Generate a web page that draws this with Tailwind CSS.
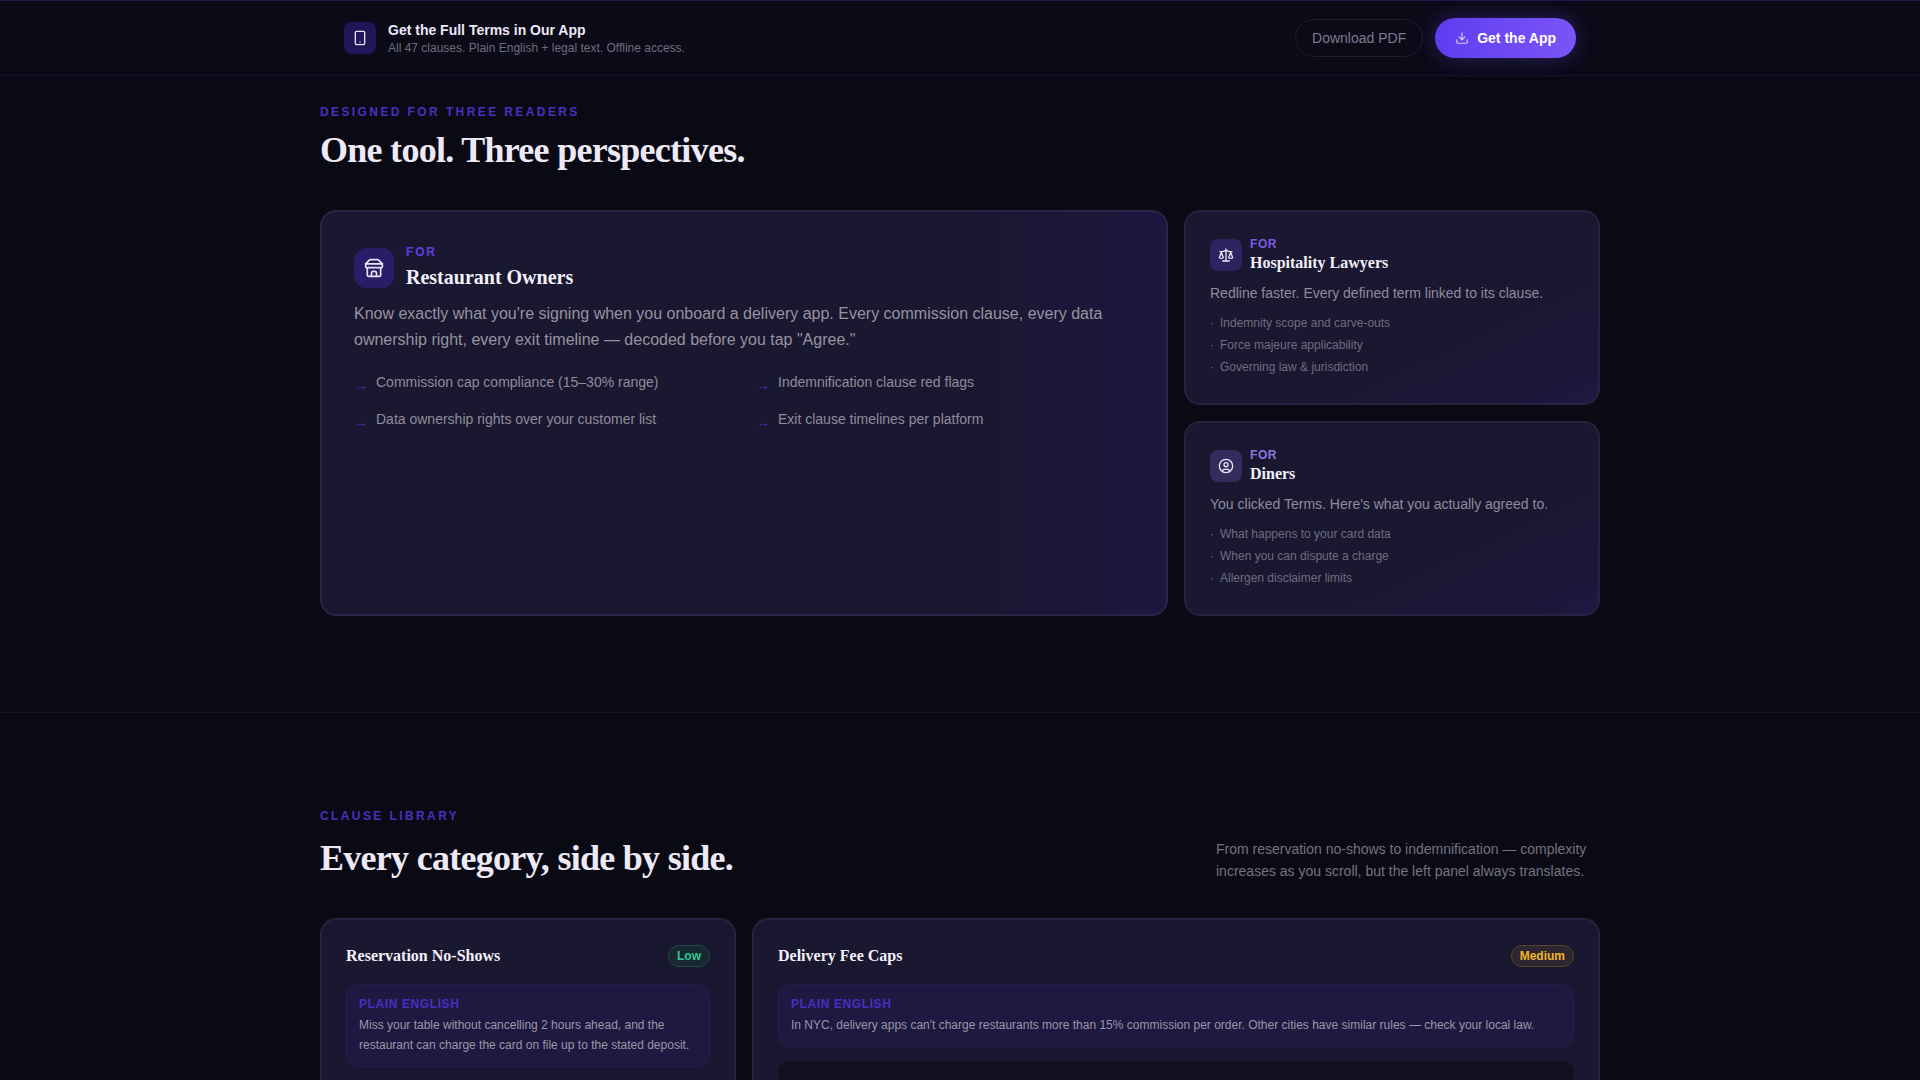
<!DOCTYPE html>
<html lang="en">
<head>
    <meta charset="UTF-8">
    <title>Terms decoded</title>
    <script src="https://cdn.jsdelivr.net/npm/@tailwindcss/browser@4"></script>
</head>
<body class="bg-[#0a0a14] font-['Liberation_Sans',Arial,sans-serif] h-[1080px] overflow-hidden">

    <!-- app bar -->
    <div class="h-[76px] border-t border-t-[#221650] border-b border-b-[#151130] bg-[#0b0a17]">
        <div class="w-[1280px] mx-auto px-6 h-[74px] flex items-center justify-between">
            <div class="flex items-center gap-3">
                <div class="w-8 h-8 rounded-lg bg-[#22165a] flex items-center justify-center">
                    <svg class="w-4 h-4 text-[#e8e4f5]" viewBox="0 0 24 24" fill="none" stroke="currentColor" stroke-width="2" stroke-linecap="round" stroke-linejoin="round"><rect x="5" y="2" width="14" height="20" rx="2"/><path d="M12 18h.01"/></svg>
                </div>
                <div>
                    <div class="text-sm leading-[19px] font-bold text-[#ede9f7]">Get the Full Terms in Our App</div>
                    <div class="text-xs leading-4 text-[#6f6c80]">All 47 clauses. Plain English + legal text. Offline access.</div>
                </div>
            </div>
            <div class="flex items-center gap-3">
                <div class="h-[38px] px-4 rounded-full border border-[#1f1d2e] flex items-center text-sm text-[#7d7a8e]">Download PDF</div>
                <div class="h-10 px-5 rounded-full bg-linear-to-r from-[#5f3df0] to-[#7c54f8] shadow-[0_0_20px_rgba(108,71,245,0.35)] flex items-center gap-2 text-sm font-bold text-white">
                    <svg class="w-3.5 h-3.5 text-[#d9ccff]" viewBox="0 0 24 24" fill="none" stroke="currentColor" stroke-width="2" stroke-linecap="round" stroke-linejoin="round"><path d="M21 15v4a2 2 0 0 1-2 2H5a2 2 0 0 1-2-2v-4"/><path d="m7 10 5 5 5-5"/><path d="M12 15V3"/></svg>
                    Get the App
                </div>
            </div>
        </div>
    </div>

    <!-- readers -->
    <section class="w-[1280px] mx-auto pt-[28px] pb-[96px]">
        <div class="text-xs leading-4 font-bold tracking-[0.2em] text-[#4a2fc0]">DESIGNED FOR THREE READERS</div>
        <h2 class="mt-[6px] font-['Liberation_Serif',serif] text-4xl leading-[48px] font-bold tracking-[-0.02em] text-[#ede9f7]">One tool. Three perspectives.</h2>

        <div class="mt-[36px] grid grid-cols-[848px_416px] gap-4">
            <div class="rounded-2xl border-2 border-[#2a2548] bg-[#1a1730] bg-linear-to-r from-[#1a1730] from-75% to-[#1e1640] p-8">
                <div class="flex items-center gap-3">
                    <div class="w-10 h-10 rounded-xl bg-[#2a1c66] flex items-center justify-center">
                        <svg class="w-5 h-5 text-[#e8e4f5]" viewBox="0 0 24 24" fill="none" stroke="currentColor" stroke-width="2" stroke-linecap="round" stroke-linejoin="round"><path d="m2 7 4.41-4.41A2 2 0 0 1 7.83 2h8.34a2 2 0 0 1 1.42.59L22 7"/><path d="M4 12v8a2 2 0 0 0 2 2h12a2 2 0 0 0 2-2v-8"/><path d="M15 22v-4a2 2 0 0 0-2-2h-2a2 2 0 0 0-2 2v4"/><path d="M2 7h20"/><path d="M22 7v3a2 2 0 0 1-2 2a2.7 2.7 0 0 1-1.59-.63.7.7 0 0 0-.82 0A2.7 2.7 0 0 1 16 12a2.7 2.7 0 0 1-1.59-.63.7.7 0 0 0-.82 0A2.7 2.7 0 0 1 12 12a2.7 2.7 0 0 1-1.59-.63.7.7 0 0 0-.82 0A2.7 2.7 0 0 1 8 12a2.7 2.7 0 0 1-1.59-.63.7.7 0 0 0-.82 0A2.7 2.7 0 0 1 4 12a2 2 0 0 1-2-2V7"/></svg>
                    </div>
                    <div>
                        <div class="text-xs leading-4 font-bold tracking-[0.15em] text-[#5f3de0]">FOR</div>
                        <div class="mt-[3px] font-['Liberation_Serif',serif] text-xl leading-7 font-bold text-[#f3f0fb]">Restaurant Owners</div>
                    </div>
                </div>
                <p class="mt-[10px] text-base leading-[26px] text-[#96939f]">Know exactly what you're signing when you onboard a delivery app. Every commission clause, every data ownership right, every exit timeline — decoded before you tap "Agree."</p>
                <div class="mt-[18px] grid grid-cols-2 gap-x-6 gap-y-3 text-sm leading-[22px] text-[#8f8c9b]">
                    <div class="flex gap-2"><span class="text-[#4a2fc0] mt-[3px]">→</span>Commission cap compliance (15–30% range)</div>
                    <div class="flex gap-2"><span class="text-[#4a2fc0] mt-[3px]">→</span>Indemnification clause red flags</div>
                    <div class="flex gap-2"><span class="text-[#4a2fc0] mt-[3px]">→</span>Data ownership rights over your customer list</div>
                    <div class="flex gap-2"><span class="text-[#4a2fc0] mt-[3px]">→</span>Exit clause timelines per platform</div>
                </div>
            </div>

            <div class="flex flex-col gap-4">
                <div class="h-[195px] rounded-2xl border-2 border-[#26223f] bg-linear-to-br from-[#1a1730] from-60% to-[#1f1740] p-6">
                    <div class="flex items-center gap-2">
                        <div class="w-8 h-8 rounded-lg bg-[#2f2260] flex items-center justify-center">
                            <svg class="w-4 h-4 text-[#e8e4f5]" viewBox="0 0 24 24" fill="none" stroke="currentColor" stroke-width="2" stroke-linecap="round" stroke-linejoin="round"><path d="m16 16 3-8 3 8c-.87.65-1.92 1-3 1s-2.13-.35-3-1Z"/><path d="m2 16 3-8 3 8c-.87.65-1.92 1-3 1s-2.13-.35-3-1Z"/><path d="M7 21h10"/><path d="M12 3v18"/><path d="M3 7h2c2 0 5-1 7-2 2 1 5 2 7 2h2"/></svg>
                        </div>
                        <div>
                            <div class="text-xs leading-4 font-bold tracking-[0.05em] text-[#7c5ae0]">FOR</div>
                            <div class="font-['Liberation_Serif',serif] text-base leading-[22px] font-bold text-[#f3f0fb]">Hospitality Lawyers</div>
                        </div>
                    </div>
                    <p class="mt-[8px] text-sm leading-[22px] text-[#8f8c9b]">Redline faster. Every defined term linked to its clause.</p>
                    <ul class="mt-[8px] text-xs leading-[22px] text-[#6f6c80]">
                        <li class="flex gap-[6px]"><span>·</span>Indemnity scope and carve-outs</li>
                        <li class="flex gap-[6px]"><span>·</span>Force majeure applicability</li>
                        <li class="flex gap-[6px]"><span>·</span>Governing law &amp; jurisdiction</li>
                    </ul>
                </div>
                <div class="h-[195px] rounded-2xl border-2 border-[#26223f] bg-linear-to-br from-[#1a1730] from-60% to-[#1f1740] p-6">
                    <div class="flex items-center gap-2">
                        <div class="w-8 h-8 rounded-lg bg-[#352b5c] flex items-center justify-center">
                            <svg class="w-4 h-4 text-[#e8e4f5]" viewBox="0 0 24 24" fill="none" stroke="currentColor" stroke-width="2" stroke-linecap="round" stroke-linejoin="round"><circle cx="12" cy="12" r="10"/><circle cx="12" cy="10" r="3"/><path d="M7 20.662V19a2 2 0 0 1 2-2h6a2 2 0 0 1 2 2v1.662"/></svg>
                        </div>
                        <div>
                            <div class="text-xs leading-4 font-bold tracking-[0.05em] text-[#8f74e0]">FOR</div>
                            <div class="font-['Liberation_Serif',serif] text-base leading-[22px] font-bold text-[#f3f0fb]">Diners</div>
                        </div>
                    </div>
                    <p class="mt-[8px] text-sm leading-[22px] text-[#8f8c9b]">You clicked Terms. Here's what you actually agreed to.</p>
                    <ul class="mt-[8px] text-xs leading-[22px] text-[#6f6c80]">
                        <li class="flex gap-[6px]"><span>·</span>What happens to your card data</li>
                        <li class="flex gap-[6px]"><span>·</span>When you can dispute a charge</li>
                        <li class="flex gap-[6px]"><span>·</span>Allergen disclaimer limits</li>
                    </ul>
                </div>
            </div>
        </div>
    </section>

    <div class="border-t border-[#17162a]"></div>

    <!-- clause library -->
    <section class="w-[1280px] mx-auto pt-[95px]">
        <div class="text-xs leading-4 font-bold tracking-[0.2em] text-[#4a2fc0]">CLAUSE LIBRARY</div>
        <div class="mt-[10px] flex items-end justify-between">
            <h2 class="font-['Liberation_Serif',serif] text-4xl leading-[48px] font-bold tracking-[-0.02em] text-[#ede9f7]">Every category, side by side.</h2>
            <p class="w-[384px] text-sm leading-[22px] text-[#757282]">From reservation no-shows to indemnification — complexity increases as you scroll, but the left panel always translates.</p>
        </div>

        <div class="mt-[36px] grid grid-cols-[416px_848px] gap-4">
            <div class="rounded-2xl border-2 border-[#26223f] bg-[#1a1730] p-6">
                <div class="flex items-center justify-between">
                    <div class="font-['Liberation_Serif',serif] text-base font-bold text-[#f3f0fb]">Reservation No-Shows</div>
                    <span class="rounded-full border border-[#1f4a47] bg-[#17292f] px-2 py-[2px] text-xs font-bold text-[#34c796]">Low</span>
                </div>
                <div class="mt-4 rounded-xl border border-[#251c52] bg-[#1f1840] px-3 py-[11px]">
                    <div class="text-xs leading-4 font-bold tracking-[0.05em] text-[#4a2fc0]">PLAIN ENGLISH</div>
                    <p class="mt-[3px] text-xs leading-5 text-[#9a97a8]">Miss your table without cancelling 2 hours ahead, and the restaurant can charge the card on file up to the stated deposit.</p>
                </div>
            </div>
            <div class="rounded-2xl border-2 border-[#26223f] bg-[#1a1730] p-6">
                <div class="flex items-center justify-between">
                    <div class="font-['Liberation_Serif',serif] text-base font-bold text-[#f3f0fb]">Delivery Fee Caps</div>
                    <span class="rounded-full border border-[#5a4528] bg-[#2d2630] px-2 py-[2px] text-xs font-bold text-[#f0b429]">Medium</span>
                </div>
                <div class="mt-4 rounded-xl border border-[#251c52] bg-[#1f1840] px-3 py-[11px]">
                    <div class="text-xs leading-4 font-bold tracking-[0.05em] text-[#4a2fc0]">PLAIN ENGLISH</div>
                    <p class="mt-[3px] text-xs leading-5 text-[#9a97a8]">In NYC, delivery apps can't charge restaurants more than 15% commission per order. Other cities have similar rules — check your local law.</p>
                </div>
                <div class="mt-[14px] h-[60px] rounded-xl bg-[#13111f]"></div>
            </div>
        </div>
    </section>
</body>
</html>
